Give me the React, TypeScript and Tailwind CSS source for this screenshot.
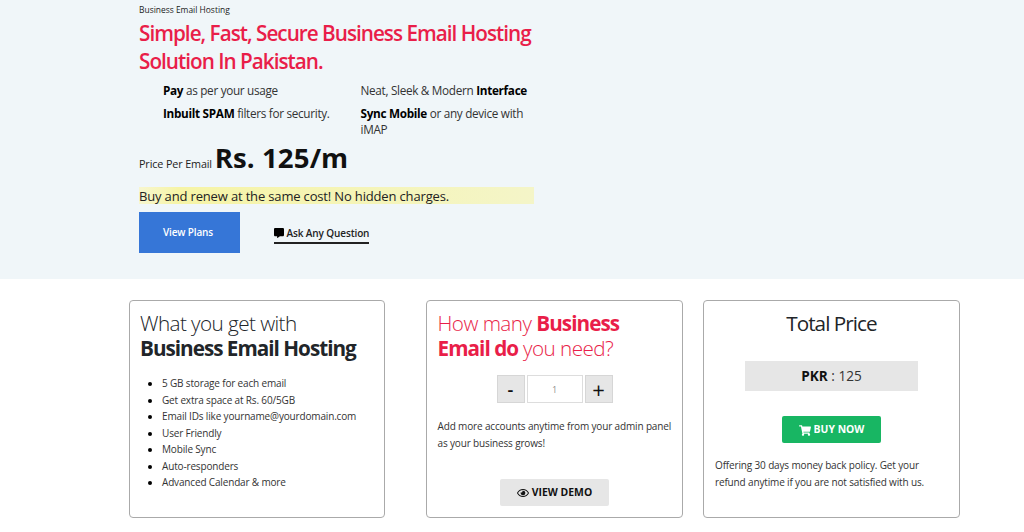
import React from "react";
import { FaCommentAlt, FaRegEye, FaShoppingCart } from "react-icons/fa";

const features = [
  "5 GB storage for each email",
  "Get extra space at Rs. 60/5GB",
  "Email IDs like yourname@yourdomain.com",
  "User Friendly",
  "Mobile Sync",
  "Auto-responders",
  "Advanced Calendar & more",
];

const Hero: React.FC = () => (
  <section className="h-[279px] bg-[#f0f6f9] pl-[139px] pt-[4px]">
    <div className="w-[395px]">
      <p className="h-[15px] text-[8.45px] leading-[12px] text-[#222]">Business Email Hosting</p>
      <h1 className="text-[20.7px] leading-[28px] font-semibold tracking-[-0.98px] whitespace-nowrap text-[#e91e49]">
        Simple, Fast, Secure Business Email Hosting
        <br />
        Solution In Pakistan.
      </h1>

      <div className="mt-[7px] flex text-[11.75px] leading-[16.5px] tracking-[-0.31px] text-[#333]">
        <ul className="w-[197px] space-y-[6px] pl-[24px] whitespace-nowrap">
          <li><b className="text-black">Pay</b> as per your usage</li>
          <li><b className="text-black">Inbuilt SPAM</b> filters for security.</li>
        </ul>
        <ul className="w-[198px] space-y-[6px] pl-[24.5px] whitespace-nowrap">
          <li>Neat, Sleek &amp; Modern <b className="text-black">Interface</b></li>
          <li>
            <b className="text-black">Sync Mobile</b> or any device with
            <br />
            iMAP
          </li>
        </ul>
      </div>

      <p className="mt-[1px] h-[36px] text-[10.8px] leading-[36px] tracking-[-0.13px] whitespace-nowrap text-[#222]">
        Price Per Email <span className="text-[27.6px] font-bold tracking-[0.1px] text-[#111]">Rs. 125/m</span>
      </p>

      <p className="mt-[12px] h-[17px] bg-linear-to-r from-[#f7f6cf] via-[#f6f4a6] via-10% to-[#f4f5c8] text-[13px] leading-[18px] tracking-[-0.16px] text-[#222]">
        Buy and renew at the same cost! No hidden charges.
      </p>

      <div className="mt-[8px] flex items-center">
        <button className="h-[41px] w-[101px] bg-[#3676d7] pt-[1px] text-[10px] font-semibold tracking-[-0.15px] text-white">
          <span className="-ml-[3px]">View Plans</span>
        </button>
        <a className="ml-[34px] mt-[6px] flex h-[18px] items-start gap-[2.5px] border-b-2 border-[#222] text-[10px] leading-[14px] font-semibold tracking-[-0.12px] text-[#222]">
          <FaCommentAlt className="mt-[2px] h-[10px] w-[10px] text-black" />
          Ask Any Question
        </a>
      </div>
    </div>
  </section>
);

const Card: React.FC<{ className: string; children: React.ReactNode }> = ({ className, children }) => (
  <div className={`h-[218px] rounded-[4px] border border-[#aaa] pt-[10px] ${className}`}>
    {children}
  </div>
);

const App: React.FC = () => {
  return (
    <main className="h-[532px] w-[1024px] overflow-hidden bg-white font-['Open_Sans',sans-serif]">
      <Hero />

      <section className="mt-[21px] flex pl-[129px]">
        <Card className="w-[256px] pl-[10px]">
          <h2 className="text-[20.7px] leading-[25px] font-light tracking-[-0.57px] whitespace-nowrap text-[#212529]">
            What you get with
            <br />
            <b className="font-bold tracking-[-1px]">Business Email Hosting</b>
          </h2>
          <ul className="mt-[14px] list-disc pl-[22px] text-[10px] leading-[16.55px] tracking-[-0.16px] text-[#333] marker:text-black">
            {features.map((item) => (
              <li key={item}>{item}</li>
            ))}
          </ul>
        </Card>

        <Card className="ml-[41px] w-[257px] pl-[10.5px]">
          <h2 className="text-[20.7px] leading-[25px] font-light tracking-[-0.55px] whitespace-nowrap text-[#e91e49]">
            How many <b className="font-bold tracking-[-0.95px]">Business</b>
            <br />
            <b className="font-bold tracking-[-0.95px]">Email do</b> you need?
          </h2>
          <div className="mt-[14px] ml-[59px] flex h-[28px] text-[#111]">
            <button className="w-[28px] border border-[#d6d6d6] bg-[#e6e6e6] text-[18px] leading-[26px] font-semibold">-</button>
            <div className="ml-[2px] w-[56px] border border-[#ddd] text-center text-[8.3px] leading-[27px] text-[#888]">1</div>
            <button className="ml-[2px] w-[28px] border border-[#d6d6d6] bg-[#e6e6e6] text-[22px] leading-[24px] font-medium">+</button>
          </div>
          <p className="mt-[15px] text-[10px] leading-[16.6px] tracking-[-0.15px] whitespace-nowrap text-[#333]">
            Add more accounts anytime from your admin panel
            <br />
            as your business grows!
          </p>
          <button className="mt-[28px] ml-[62.5px] flex h-[27px] w-[109px] items-center justify-center gap-[3px] rounded-[2px] bg-[#e6e6e6] pt-[1px] text-[10.4px] font-bold text-[#111]">
            <FaRegEye className="h-[12px] w-[12px]" />
            VIEW DEMO
          </button>
        </Card>

        <Card className="ml-[20px] w-[257px] pl-[11px]">
          <h2 className="mr-[11px] text-center text-[20.7px] leading-[25px] font-normal tracking-[-0.95px] text-[#212529]">
            Total Price
          </h2>
          <div className="mt-[25px] ml-[30px] h-[30px] w-[173px] bg-[#e6e6e6] text-center text-[13.6px] leading-[30px] text-[#333]">
            <b className="text-[#111]">PKR</b> : 125
          </div>
          <button className="mt-[25px] ml-[67px] flex h-[27px] w-[99px] items-center justify-center gap-[3px] rounded-[2px] bg-[#18b663] pt-[1px] text-[10.4px] font-bold text-white">
            <FaShoppingCart className="h-[11px] w-[12px]" />
            BUY NOW
          </button>
          <p className="mt-[14px] text-[10px] leading-[16.6px] tracking-[-0.15px] whitespace-nowrap text-[#333]">
            Offering 30 days money back policy. Get your
            <br />
            refund anytime if you are not satisfied with us.
          </p>
        </Card>
      </section>
    </main>
  );
};

export default App;
